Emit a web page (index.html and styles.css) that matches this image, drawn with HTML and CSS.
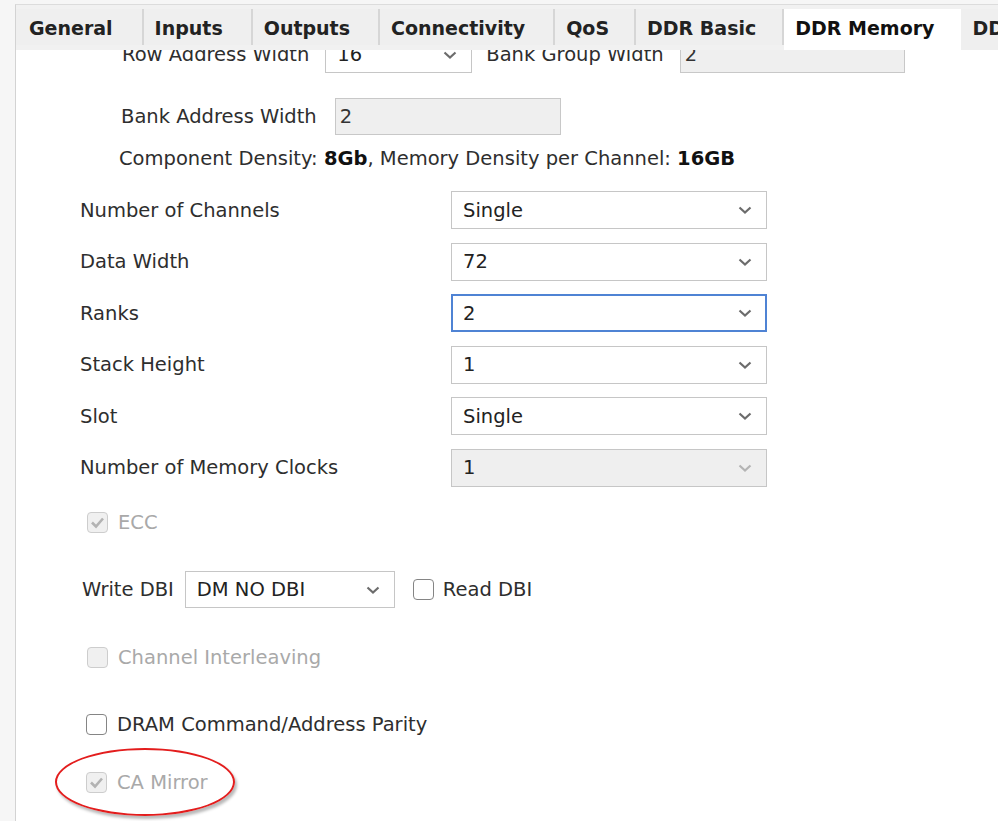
FILE: index.html
```html
<!DOCTYPE html>
<html>
<head>
<meta charset="utf-8">
<title>DDR Memory</title>
<link rel="stylesheet" href="styles.css">
</head>
<body>
<div class="window">
  <div class="tabbar">
    <div class="tab first">General</div>
    <div class="tab">Inputs</div>
    <div class="tab">Outputs</div>
    <div class="tab">Connectivity</div>
    <div class="tab qos">QoS</div>
    <div class="tab basic">DDR Basic</div>
    <div class="tab active">DDR Memory</div>
    <div class="tab last">DDR Address Mapping</div>
  </div>
  <div class="panel">
    <div class="content">
      <div class="group">
        <div class="grow g1">
          <span class="lbl">Row Address Width</span>
          <div class="combo w147"><span class="val">16</span><svg class="chev" width="14" height="8" viewBox="0 0 14 8"><polyline points="1.5,1.5 7,6.5 12.5,1.5"/></svg></div>
          <span class="lbl gl">Bank Group Width</span>
          <div class="box w225">2</div>
        </div>
        <div class="grow g2">
          <span class="lbl">Bank Address Width</span>
          <div class="box w226">2</div>
        </div>
        <div class="density">Component Density: <b>8Gb</b>, Memory Density per Channel: <b>16GB</b></div>
      </div>

      <div class="form">
        <span class="lbl">Number of Channels</span>
        <div class="combo"><span class="val">Single</span><svg class="chev" width="14" height="8" viewBox="0 0 14 8"><polyline points="1.5,1.5 7,6.5 12.5,1.5"/></svg></div>
        <span class="lbl">Data Width</span>
        <div class="combo"><span class="val">72</span><svg class="chev" width="14" height="8" viewBox="0 0 14 8"><polyline points="1.5,1.5 7,6.5 12.5,1.5"/></svg></div>
        <span class="lbl">Ranks</span>
        <div class="combo focus"><span class="val">2</span><svg class="chev" width="14" height="8" viewBox="0 0 14 8"><polyline points="1.5,1.5 7,6.5 12.5,1.5"/></svg></div>
        <span class="lbl">Stack Height</span>
        <div class="combo"><span class="val">1</span><svg class="chev" width="14" height="8" viewBox="0 0 14 8"><polyline points="1.5,1.5 7,6.5 12.5,1.5"/></svg></div>
        <span class="lbl">Slot</span>
        <div class="combo"><span class="val">Single</span><svg class="chev" width="14" height="8" viewBox="0 0 14 8"><polyline points="1.5,1.5 7,6.5 12.5,1.5"/></svg></div>
        <span class="lbl">Number of Memory Clocks</span>
        <div class="combo disabled"><span class="val">1</span><svg class="chev" width="14" height="8" viewBox="0 0 14 8"><polyline points="1.5,1.5 7,6.5 12.5,1.5"/></svg></div>
      </div>

      <div class="check r-ecc dis">
        <span class="cb on"><svg width="15" height="13" viewBox="0 0 15 13"><polyline points="2,6.5 6,10.5 13,2.5"/></svg></span>
        <span>ECC</span>
      </div>

      <div class="dbi">
        <span class="lbl">Write DBI</span>
        <div class="combo w210"><span class="val">DM NO DBI</span><svg class="chev" width="14" height="8" viewBox="0 0 14 8"><polyline points="1.5,1.5 7,6.5 12.5,1.5"/></svg></div>
        <span class="cb"></span>
        <span class="lbl">Read DBI</span>
      </div>

      <div class="check r-ci dis">
        <span class="cb"></span>
        <span>Channel Interleaving</span>
      </div>

      <div class="check r-dram">
        <span class="cb"></span>
        <span>DRAM Command/Address Parity</span>
      </div>

      <div class="check r-ca dis">
        <span class="cb on"><svg width="15" height="13" viewBox="0 0 15 13"><polyline points="2,6.5 6,10.5 13,2.5"/></svg></span>
        <span>CA Mirror</span>
        <span class="mark"></span>
      </div>
    </div>
  </div>
</div>
</body>
</html>
```

FILE: styles.css
```css
html, body {
  margin: 0;
  padding: 0;
  height: 100%;
  overflow: hidden;
}
body {
  background: #f6f6f6;
  font-family: "DejaVu Sans", "Liberation Sans", sans-serif;
  font-size: 19.5px;
  color: #2e2e2e;
}
.window {
  margin: 4px 0 0 15px;
  height: calc(100% - 4px);
  border-left: 1px solid #d3d3d3;
  border-top: 1px solid #dcdcdc;
  display: flex;
  flex-direction: column;
  background: #fff;
}
.tabbar {
  display: flex;
  align-items: flex-start;
  height: 45px;
  background: #f1f1f1;
  padding-top: 4px;
  box-sizing: border-box;
  overflow: hidden;
  white-space: nowrap;
  flex: none;
  position: relative;
  z-index: 2;
  font-size: 19px;
}
.tab {
  flex: none;
  height: 36px;
  line-height: 38px;
  padding: 0 28px 0 11px;
  font-weight: bold;
  color: #222;
  background: #efefef;
  border-right: 2px solid #d6d6d6;
}
.tab.first {
  padding-left: 13px;
  padding-right: 29px;
}
.tab.qos {
  padding-right: 25px;
}
.tab.basic {
  padding-right: 26px;
}
.tab.active {
  background: #fff;
  height: 45px;
  border-right: none;
  padding-right: 27px;
  color: #111;
}
.tab.last {
  border-right: none;
  height: 43px;
}
.panel {
  flex: 1;
  overflow: hidden;
  background: #fff;
  position: relative;
}
.content {
  margin-top: -14px;
}
.lbl {
  white-space: nowrap;
}
.group {
  padding-left: 105px;
}
.grow {
  display: flex;
  align-items: center;
  height: 37px;
}
.g1 .lbl:first-child {
  margin-left: 1px;
  margin-right: 16px;
}
.g1 .gl {
  margin-left: 14px;
  margin-right: 16px;
}
.g2 {
  margin-top: 25px;
}
.g2 .lbl {
  margin-right: 18px;
}
.density {
  margin-top: 12px;
  line-height: 24px;
  margin-left: -2px;
  white-space: nowrap;
}
.density b {
  color: #111;
}

.combo {
  box-sizing: border-box;
  height: 38px;
  border: 1px solid #c6c6c6;
  background: #fff;
  display: flex;
  align-items: center;
  justify-content: space-between;
  padding: 0 14px 0 11px;
  white-space: nowrap;
}
.combo .val {
  color: #222;
}
.chev {
  flex: none;
}
.chev polyline {
  fill: none;
  stroke: #6c6c6c;
  stroke-width: 2.2;
}
.combo.focus {
  border: 2px solid #4f83d4;
  padding-left: 10px;
  padding-right: 13px;
}
.combo.disabled {
  background: #efefef;
}
.combo.disabled .chev polyline {
  stroke: #b4b4b4;
}
.w147 { width: 147px; height: 37px; }
.w210 { width: 210px; height: 37px; }

.box {
  box-sizing: border-box;
  height: 37px;
  border: 1px solid #c8c8c8;
  background: #efefef;
  padding-left: 4px;
  line-height: 35px;
  color: #333;
}
.w225 { width: 225px; }
.w226 { width: 226px; }

.form {
  display: grid;
  grid-template-columns: 371px 316px;
  row-gap: 13.5px;
  align-items: center;
  margin-top: 20px;
  padding-left: 64px;
}
.form .combo {
  height: 38px;
}

.check {
  display: flex;
  align-items: center;
  height: 22px;
  padding-left: 70px;
  gap: 10px;
  position: relative;
}
.check.dis {
  color: #a9a9a9;
}
.cb {
  box-sizing: border-box;
  width: 21px;
  height: 21px;
  border: 1.5px solid #858585;
  border-radius: 4px;
  background: #fff;
  display: flex;
  align-items: center;
  justify-content: center;
  flex: none;
}
.dis .cb {
  border-color: #cdcdcd;
  background: #f0f0f0;
}
.cb svg polyline {
  fill: none;
  stroke: #b3b3b3;
  stroke-width: 2.6;
}
.r-ecc { margin-top: 24.5px; padding-left: 71px; }
.r-ci { margin-top: 38px; padding-left: 71px; }
.r-dram { margin-top: 45.5px; }
.r-ca { margin-top: 36px; }

.dbi {
  display: flex;
  align-items: center;
  margin-top: 38px;
  padding-left: 66px;
}
.dbi .combo {
  margin-left: 11px;
  margin-right: 18px;
}
.dbi .cb {
  margin-right: 9px;
}

.mark {
  position: absolute;
  left: 39px;
  top: -24px;
  width: 180px;
  height: 68px;
  box-sizing: border-box;
  border: 2px solid #e31d1d;
  border-radius: 50%;
  box-shadow: 2px 3px 3px rgba(0, 0, 0, 0.28);
}
```
